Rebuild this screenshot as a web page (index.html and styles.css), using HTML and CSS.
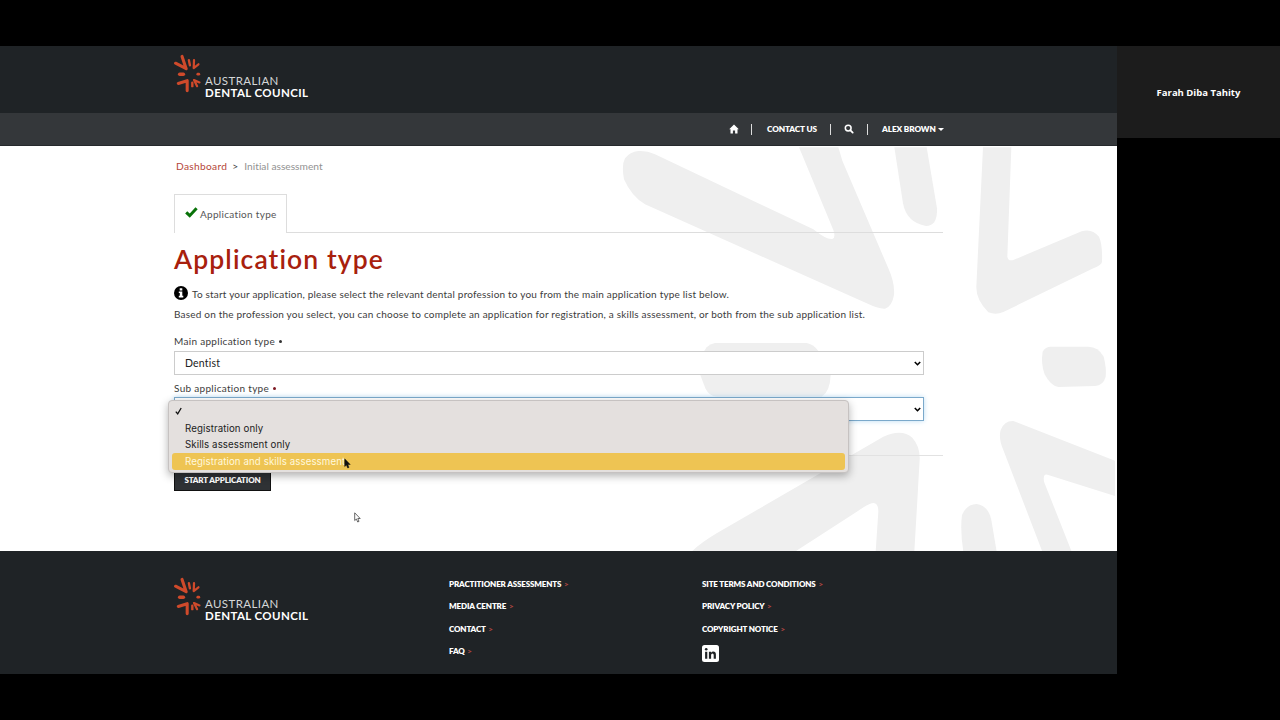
FILE: index.html
```html
<!DOCTYPE html>
<html lang="en">
<head>
<meta charset="UTF-8">
<meta name="viewport" content="width=device-width, initial-scale=1.0">
<title>Application type - Australian Dental Council</title>
<link rel="stylesheet" href="styles.css">
</head>
<body>

<!-- Logo mark, used in header and footer -->
<svg class="defs">
  <symbol id="mark" viewBox="-3 0 84 114">
    <g fill="none" stroke="#cf4a2b" stroke-linecap="round" stroke-linejoin="round">
      <path stroke-width="9" d="M7 27 L38 43 L26 7"/>
      <path stroke-width="7" d="M46 18 L49 33"/>
      <path stroke-width="6.5" d="M61 18 L60 41 L74 30"/>
      <path stroke-width="10" d="M19 59 H30"/>
      <path stroke-width="8" d="M72 59 H75"/>
      <path stroke-width="9" d="M15 86 L41 78 L41 107"/>
      <path stroke-width="7" d="M56 84 V94"/>
      <path stroke-width="6.5" d="M70 94 L61 76 L77 83"/>
    </g>
  </symbol>
</svg>

<div class="screen">
  <div class="site">
    <header class="header">
      <a class="logo">
        <svg class="mark"><use href="#mark"/></svg>
        <span class="logo-text"><span class="l1">AUSTRALIAN</span><span class="l2">DENTAL COUNCIL</span></span>
      </a>
    </header>

    <nav class="nav">
      <svg class="home" viewBox="0 0 10 10"><path fill="#fff" d="M5 .6 L9.8 5.2 H8.5 V9.4 H6.1 V6.6 H3.9 V9.4 H1.5 V5.2 H.2 Z"/></svg>
      <span class="sep"></span>
      <a class="contact">CONTACT US</a>
      <span class="sep"></span>
      <svg class="search" viewBox="0 0 10 10"><circle cx="4.2" cy="4.1" r="2.9" fill="none" stroke="#fff" stroke-width="1.5"/><path stroke="#fff" stroke-width="1.8" stroke-linecap="round" d="M6.5 6.4 L8.7 8.6"/></svg>
      <span class="sep"></span>
      <a class="user">ALEX BROWN</a>
      <span class="caret"></span>
    </nav>

    <main class="main">
      <svg class="pattern" viewBox="0 18 1551 1215">
        <g fill="#efefef">
          <path d="M115 33 Q140 31 165 43 L640 268 Q680 300 697 297 Q708 293 700 270 L597 22 H715 L727 62 L865 385 Q885 430 882 465 Q876 500 855 506 Q835 507 800 490 L135 193 Q95 170 72 118 Q64 75 75 55 Q90 35 115 33 Z"/>
          <path d="M883 22 H980 L1011 205 Q1013 258 978 258 Q920 248 909 190 Z"/>
          <path d="M1149 22 H1234 L1222 350 Q1224 364 1240 360 L1445 274 Q1475 264 1497 290 Q1508 315 1506 365 Q1505 375 1480 385 L1210 516 Q1188 526 1165 517 Q1128 480 1129 440 Z"/>
          <path d="M345 609 H620 Q640 612 655 633 L692 705 Q690 755 665 770 H350 Q328 770 316 745 L299 700 Q300 645 320 622 Q330 612 345 609 Z"/>
          <path d="M1350 620 H1465 Q1495 620 1511 650 Q1520 685 1517 710 Q1510 736 1485 738 L1375 741 Q1352 738 1334 703 Q1322 670 1328 635 Q1335 621 1350 620 Z"/>
          <path d="M275 1235 Q300 1210 350 1180 L850 890 Q905 865 937 893 Q961 920 959 960 L943 1235 H827 L835 1115 Q835 1085 815 1090 Q805 1092 775 1112 L585 1235 Z"/>
          <path d="M1090 1235 Q1080 1170 1086 1125 Q1100 1092 1130 1092 Q1165 1097 1174 1140 L1190 1235 Z"/>
          <path d="M1240 843 L1545 962 V1068 L1345 1005 Q1328 998 1332 1025 L1415 1235 H1327 L1210 930 Q1195 895 1202 870 Q1213 842 1240 843 Z"/>
        </g>
      </svg>

      <div class="content">
        <div class="breadcrumb"><a>Dashboard</a><b>&gt;</b><span>Initial assessment</span></div>

        <div class="tabs">
          <div class="tab">
            <svg class="check" viewBox="0 0 13 11"><path fill="none" stroke="#087208" stroke-width="3" d="M1.2 5.4 L4.7 8.7 L11.6 1.3"/></svg>
            <span>Application type</span>
          </div>
        </div>

        <h1>Application type</h1>

        <p class="intro">
          <svg class="info" viewBox="0 0 14 14"><circle cx="7" cy="7" r="7"/><path fill="#fff" d="M5.7 2.3 H8.3 V4.4 H5.7 Z M4.8 5.5 H8.3 V9.8 H9.3 V11.4 H4.8 V9.8 H5.8 V7 H4.8 Z"/></svg>
          <span>To start your application, please select the relevant dental profession to you from the main application type list below.</span>
        </p>
        <p class="based">Based on the profession you select, you can choose to complete an application for registration, a skills assessment, or both from the sub application list.</p>

        <label class="main-label">Main application type <i></i></label>
        <div class="select">
          <span>Dentist</span>
          <svg class="arrow" viewBox="0 0 7 5"><path d="M.8 1 L3.5 3.7 L6.2 1"/></svg>
        </div>

        <label class="sub-label">Sub application type <i class="red"></i></label>
        <div class="select focus">
          <span></span>
          <svg class="arrow" viewBox="0 0 7 5"><path d="M.8 1 L3.5 3.7 L6.2 1"/></svg>
          <div class="menu">
            <div class="option"><svg class="tick" viewBox="0 0 7 8"><path d="M.8 4.6 L2.7 6.8 L6.2 1"/></svg></div>
            <div class="option">Registration only</div>
            <div class="option">Skills assessment only</div>
            <div class="option active">Registration and skills assessment</div>
          </div>
        </div>

        <hr>
        <button type="button">START APPLICATION</button>
      </div>
    </main>

    <footer class="footer">
      <a class="logo">
        <svg class="mark"><use href="#mark"/></svg>
        <span class="logo-text"><span class="l1">AUSTRALIAN</span><span class="l2">DENTAL COUNCIL</span></span>
      </a>
      <div class="links">
        <a>PRACTITIONER ASSESSMENTS <b>&gt;</b></a>
        <a>MEDIA CENTRE <b>&gt;</b></a>
        <a>CONTACT <b>&gt;</b></a>
        <a>FAQ <b>&gt;</b></a>
      </div>
      <div class="links">
        <a>SITE TERMS AND CONDITIONS <b>&gt;</b></a>
        <a>PRIVACY POLICY <b>&gt;</b></a>
        <a>COPYRIGHT NOTICE <b>&gt;</b></a>
        <svg class="linkedin" viewBox="0 0 17 17"><rect width="17" height="17" rx="2.5" fill="#fff"/><g fill="#1f2326"><circle cx="4.2" cy="4.3" r="1.3"/><path d="M3.1 6.7 H5.3 V13.8 H3.1 Z M6.9 6.7 H9 V7.7 Q9.8 6.5 11.3 6.5 Q13.9 6.5 13.9 9.6 V13.8 H11.7 V10 Q11.7 8.4 10.5 8.4 Q9.1 8.4 9.1 10.1 V13.8 H6.9 Z"/></g></svg>
      </div>
    </footer>
  </div>

  <aside class="participant">Farah Diba Tahity</aside>

  <!-- Mouse pointers -->
  <svg class="pointer black" viewBox="0 0 7 11"><path fill="#111" stroke="#111" stroke-width=".5" d="M.7 .8 V8.5 L2.4 7 L3.7 10 L5 9.4 L3.8 6.5 H6.2 Z"/></svg>
  <svg class="pointer white" viewBox="0 0 7 11"><path fill="#fff" stroke="#444" stroke-width=".8" d="M.7 .8 V8.5 L2.4 7 L3.7 10 L5 9.4 L3.8 6.5 H6.2 Z"/></svg>
</div>

</body>
</html>
```
FILE: styles.css
```css
* {
  box-sizing: border-box;
}

body {
  margin: 0;
  background-color: #000;
  font-family: Lato, sans-serif;
  font-variant-ligatures: none;
  color: #3c3c3c;
}

.defs {
  position: absolute;
  width: 0;
  height: 0;
}

.screen {
  position: relative;
  display: flex;
  align-items: flex-start;
  width: 1280px;
  height: 720px;
  padding-top: 46px;
  overflow: hidden;
}

.site {
  width: 1117px;
  height: 628px;
  background-color: #fff;
}

.header {
  height: 67px;
  padding: 8px 0 0 172px;
  background-color: #1f2326;
}

.logo {
  display: flex;
  color: #fff;
}

.mark {
  width: 29px;
  height: 39px;
}

.logo-text {
  display: flex;
  flex-direction: column;
  padding: 21px 0 0 4px;
  font-size: 11.5px;
  line-height: 12px;
  white-space: nowrap;
}

.l1 {
  color: #d5d7d8;
  letter-spacing: 0.4px;
}

.l2 {
  font-weight: 700;
  letter-spacing: 0.4px;
}

.nav {
  display: flex;
  align-items: center;
  height: 33px;
  padding-left: 729px;
  background-color: #34373a;
  border-bottom: 1px solid #26292c;
  color: #fff;
  font-size: 8.2px;
  font-weight: 800;
  letter-spacing: -0.1px;
  white-space: nowrap;
}

.home,
.search {
  width: 10px;
  height: 10px;
}

.search {
  margin-left: -1px;
}

.sep {
  width: 1px;
  height: 11px;
  background-color: #ddd;
}

.nav .home + .sep {
  margin: 0 15px 0 12px;
}

.contact {
  width: 50px;
}

.contact + .sep {
  margin: 0 14px 0 13px;
}

.search + .sep {
  margin: 0 14px 0 13px;
}

.user {
  width: 52px;
}

.caret {
  width: 6px;
  margin-left: 4px;
  border: 3px solid transparent;
  border-top-color: #fff;
  border-bottom: 0;
}

.main {
  position: relative;
  height: 405px;
  padding: 12px 0 0 174px;
  overflow: hidden;
}

.pattern {
  position: absolute;
  top: 0;
  left: 600px;
  width: 517px;
  height: 405px;
}

.content {
  position: relative;
  width: 769px;
  font-size: 10px;
  letter-spacing: 0.2px;
  white-space: nowrap;
}

.breadcrumb {
  display: flex;
  height: 18px;
  padding-left: 2px;
  font-size: 10.2px;
  line-height: 17px;
}

.breadcrumb a {
  color: #b5473a;
  letter-spacing: 0.3px;
}

.breadcrumb b {
  margin: 0 6px 0 5px;
  font-weight: 400;
}

.breadcrumb span {
  color: #929292;
  letter-spacing: 0;
}

.tabs {
  height: 39px;
  margin-top: 18px;
  border-bottom: 1px solid #ddd;
}

.tab {
  display: flex;
  align-items: center;
  width: 113px;
  height: 39px;
  padding-left: 10px;
  background-color: #fff;
  border: 1px solid #ddd;
  border-bottom: 0;
  color: #555;
  letter-spacing: 0.3px;
}

.tab span {
  margin-top: -1px;
}

.check {
  width: 13px;
  height: 11px;
  margin: -3px 2px 0 0;
}

h1 {
  height: 32px;
  margin: 10px 0 0;
  color: #a8200d;
  font-size: 26.5px;
  font-weight: 600;
  letter-spacing: 1.1px;
  line-height: 32px;
}

p {
  margin: 0;
}

.intro {
  display: flex;
  align-items: center;
  height: 18px;
  margin-top: 10px;
}

.info {
  width: 14px;
  height: 14px;
  margin: -2px 4px 0 0;
}

.based {
  height: 20px;
  margin-top: 1px;
  line-height: 20px;
}

label {
  display: flex;
  align-items: center;
  height: 18px;
  padding-bottom: 1px;
  letter-spacing: 0.3px;
}

.main-label {
  margin-top: 8px;
}

.sub-label {
  margin-top: 4px;
}

label i {
  width: 3px;
  height: 3px;
  margin: 1px 0 0 4px;
  background-color: #333;
  border-radius: 50%;
}

label .red {
  background-color: #7d1822;
}

.select {
  position: relative;
  display: flex;
  align-items: center;
  justify-content: space-between;
  width: 750px;
  height: 24px;
  margin-top: 1px;
  padding: 0 2px 0 10px;
  background-color: #fff;
  border: 1px solid #ccc;
  color: #222;
  font-size: 10.5px;
}

.select.focus {
  margin-top: 0;
  border-color: #7ba9cb;
  box-shadow: 0 0 5px #b9dcf4;
}

.arrow {
  width: 7px;
  height: 5px;
  fill: none;
  stroke: #000;
  stroke-width: 1.6;
}

/* Native style list, opened over the form */
.menu {
  position: absolute;
  top: 2px;
  left: -7px;
  width: 681px;
  height: 73px;
  padding: 2px 3px;
  background-color: #e4e0de;
  border: 1px solid #c6c2c1;
  border-radius: 4px;
  box-shadow: 0 3px 8px rgba(0, 0, 0, 0.3);
  font-family: Inter, sans-serif;
  font-size: 9.7px;
  letter-spacing: 0.1px;
}

.option {
  display: flex;
  align-items: center;
  height: 16.8px;
  padding-left: 13px;
}

.option.active {
  background-color: #eec453;
  border-radius: 3px;
  color: #fff8dc;
}

.tick {
  width: 7px;
  height: 8px;
  margin-left: -10px;
  fill: none;
  stroke: #111;
  stroke-width: 1.3;
}

hr {
  height: 1px;
  margin: 34px 0 0;
  background-color: #e2e2e2;
  border: 0;
}

button {
  display: block;
  width: 97px;
  height: 22px;
  margin-top: 13px;
  padding: 0 0 1px;
  background-color: #2f3235;
  border: 1px solid #111;
  color: #fff;
  font-family: Lato, sans-serif;
  font-size: 8px;
  font-weight: 800;
  letter-spacing: -0.15px;
}

.footer {
  display: flex;
  height: 123px;
  padding: 26px 0 0 172px;
  background-color: #1f2326;
}

.footer .logo {
  width: 277px;
}

.links {
  display: flex;
  flex-direction: column;
  width: 253px;
  margin-top: -4px;
  color: #fff;
  font-size: 8px;
  font-weight: 800;
  letter-spacing: -0.14px;
  white-space: nowrap;
}

.links a {
  height: 22.4px;
  line-height: 22px;
}

.links b {
  margin-left: 1px;
  color: #a84440;
}

.linkedin {
  width: 17px;
  height: 17px;
  margin-top: 5px;
}

.participant {
  width: 163px;
  height: 92px;
  background-color: #1c1c1c;
  color: #fff;
  font-family: "Open Sans", sans-serif;
  font-size: 9.5px;
  font-weight: 700;
  line-height: 93px;
  text-align: center;
}

.pointer {
  position: absolute;
  width: 7px;
  height: 11px;
}

.pointer.black {
  top: 458px;
  left: 344px;
}

.pointer.white {
  top: 512px;
  left: 354px;
}
```
